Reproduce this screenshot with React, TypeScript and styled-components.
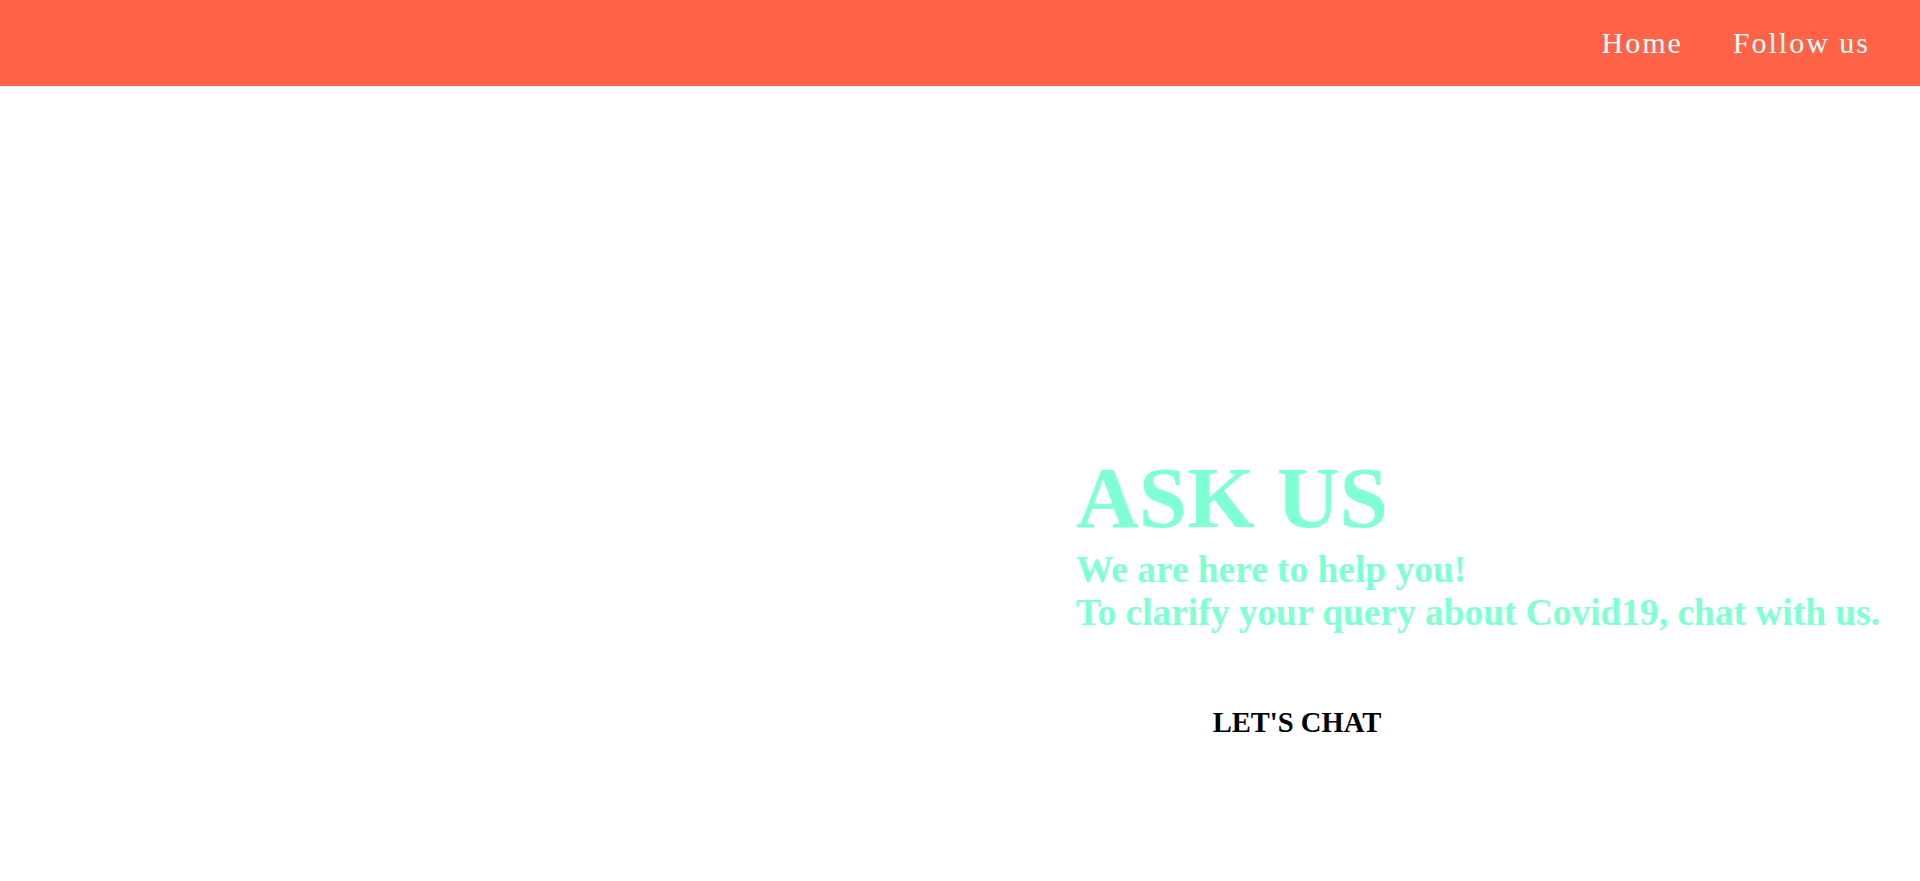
import React from "react";
import styled, { createGlobalStyle } from "styled-components";

const Global = createGlobalStyle`
  html, body { margin: 0; padding: 0; background: #ffffff; }
  body { font-family: "Liberation Serif", "Times New Roman", serif; }
  * { box-sizing: border-box; }
`;

const Header = styled.header`
  height: 86px;
  background: #ff6347;
  display: flex;
  align-items: center;
  justify-content: flex-end;
  padding-right: 50px;
`;

const Nav = styled.nav`
  display: flex;
  align-items: center;
  gap: 50px;
`;

const NavLink = styled.a`
  font-family: "Liberation Serif", "Times New Roman", serif;
  font-size: 30px;
  letter-spacing: 2px;
  color: #ffffff;
  text-decoration: none;
  cursor: pointer;
`;

const Main = styled.main`
  display: grid;
  grid-template-columns: 1076px 1fr;
  padding-top: 361px;
`;

const ImageSlot = styled.div``;

const TextColumn = styled.section`
  display: flex;
  flex-direction: column;
  align-items: flex-start;
`;

const Title = styled.h1`
  margin: 0;
  font-family: "Liberation Serif", "Times New Roman", serif;
  font-weight: 700;
  font-size: 87px;
  color: #7fffd4;
`;

const Subtitle = styled.p`
  margin: 0;
  font-family: "Liberation Serif", "Times New Roman", serif;
  font-weight: 700;
  font-size: 37.4px;
  color: #7fffd4;
  white-space: nowrap;
`;

const ChatButton = styled.button`
  margin-top: 73px;
  width: 442px;
  padding: 0;
  border: none;
  background: transparent;
  font-family: "Liberation Serif", "Times New Roman", serif;
  font-weight: 700;
  font-size: 28.6px;
  line-height: 1.15;
  color: #000000;
  text-align: center;
  cursor: pointer;
`;

export default function App() {
  return (
    <>
      <Global />
      <Header>
        <Nav>
          <NavLink>Home</NavLink>
          <NavLink>Follow us</NavLink>
        </Nav>
      </Header>
      <Main>
        <ImageSlot />
        <TextColumn>
          <Title>ASK US</Title>
          <Subtitle>
            We are here to help you!
            <br />
            To clarify your query about Covid19, chat with us.
          </Subtitle>
          <ChatButton>LET'S CHAT</ChatButton>
        </TextColumn>
      </Main>
    </>
  );
}
